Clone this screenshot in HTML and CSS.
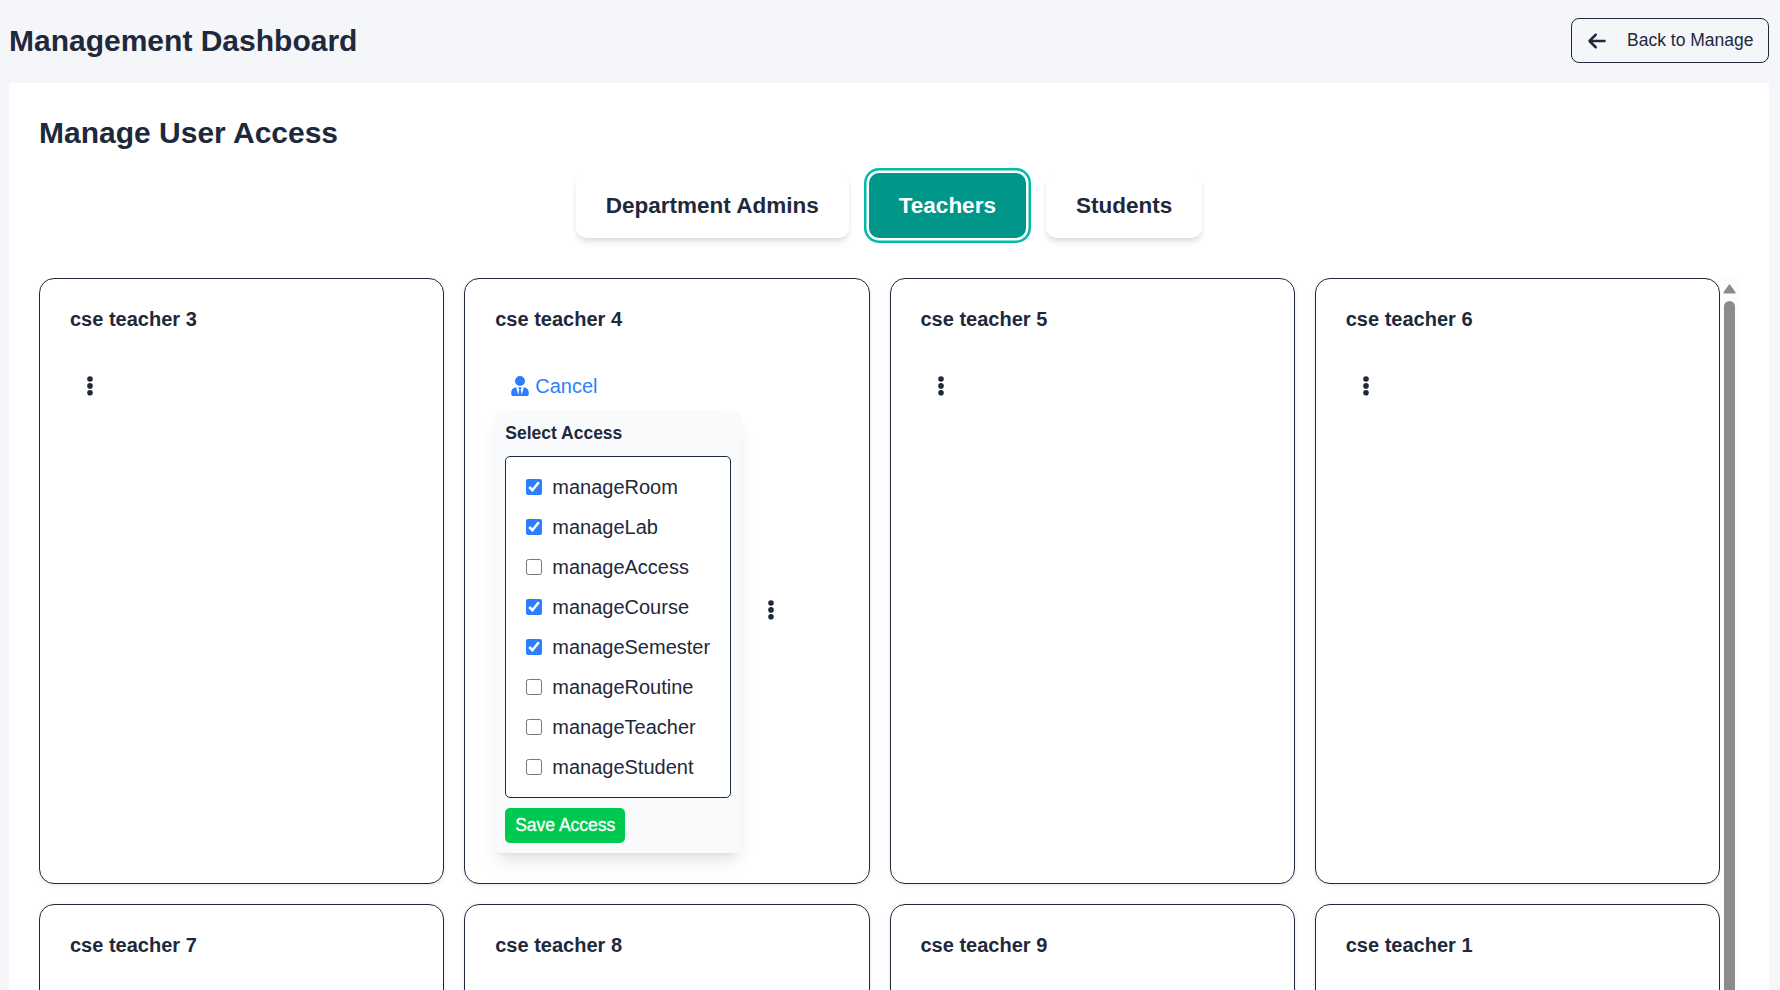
FILE: index.html
```html
<!DOCTYPE html>
<html lang="en">
<head>
<meta charset="utf-8">
<title>Management Dashboard</title>
<link rel="stylesheet" href="styles.css">
</head>
<body>
<svg class="defs" aria-hidden="true">
  <symbol id="dots" viewBox="0 0 6 20"><circle cx="3" cy="3" r="2.800"/><circle cx="3" cy="9.900" r="2.800"/><circle cx="3" cy="16.800" r="2.800"/></symbol>
</svg>
<header class="topbar">
  <h1>Management Dashboard</h1>
  <button class="back">
    <svg class="arrow" viewBox="0 0 448 512"><path d="M9.400 233.400c-12.500 12.500-12.500 32.800 0 45.300l160 160c12.500 12.500 32.800 12.500 45.300 0s12.500-32.800 0-45.300L109.200 288 416 288c17.700 0 32-14.300 32-32s-14.300-32-32-32l-306.700 0L214.600 118.600c12.500-12.500 12.500-32.800 0-45.300s-32.800-12.500-45.300 0l-160 160z"/></svg>
    <span>Back to Manage</span>
  </button>
</header>
<main class="page">
  <h2>Manage User Access</h2>
  <nav class="tabs">
    <button class="tab">Department Admins</button>
    <button class="tab active">Teachers</button>
    <button class="tab">Students</button>
  </nav>
  <div class="scroller">
    <div class="grid">
      <article class="card"><h3>cse teacher 3</h3><div class="row"><button class="menu"><svg><use href="#dots"/></svg></button></div></article>
      <article class="card">
        <h3>cse teacher 4</h3>
        <div class="row">
          <div class="access">
            <button class="cancel">
              <svg viewBox="0 0 448 512"><path d="M224 256a128 128 0 1 0 0-256 128 128 0 1 0 0 256zm95.800 32.600L272 480l-32-136 32-56h-96l32 56-32 136-47.800-191.400C56.900 292 0 350.300 0 422.400V464c0 26.500 21.500 48 48 48h352c26.500 0 48-21.500 48-48v-41.600c0-72.100-56.900-130.400-128.200-133.800z"/></svg>
              <span>Cancel</span>
            </button>
            <section class="panel">
              <h4>Select Access</h4>
              <div class="options">
                <label><input type="checkbox" checked><span>manageRoom</span></label>
                <label><input type="checkbox" checked><span>manageLab</span></label>
                <label><input type="checkbox"><span>manageAccess</span></label>
                <label><input type="checkbox" checked><span>manageCourse</span></label>
                <label><input type="checkbox" checked><span>manageSemester</span></label>
                <label><input type="checkbox"><span>manageRoutine</span></label>
                <label><input type="checkbox"><span>manageTeacher</span></label>
                <label><input type="checkbox"><span>manageStudent</span></label>
              </div>
              <button class="save">Save Access</button>
            </section>
          </div>
          <button class="menu"><svg><use href="#dots"/></svg></button>
        </div>
      </article>
      <article class="card"><h3>cse teacher 5</h3><div class="row"><button class="menu"><svg><use href="#dots"/></svg></button></div></article>
      <article class="card"><h3>cse teacher 6</h3><div class="row"><button class="menu"><svg><use href="#dots"/></svg></button></div></article>
      <article class="card"><h3>cse teacher 7</h3></article>
      <article class="card"><h3>cse teacher 8</h3></article>
      <article class="card"><h3>cse teacher 9</h3></article>
      <article class="card"><h3>cse teacher 1</h3></article>
    </div>
    <div class="scrollbar">
      <svg viewBox="0 0 13 10"><path d="M6.500 1.200 11.800 8.800H1.200z"/></svg>
      <div class="thumb"></div>
    </div>
  </div>
</main>
</body>
</html>
```
FILE: styles.css
```css
* { box-sizing: border-box; margin: 0; padding: 0; }
body {
  height: 990px;
  overflow: hidden;
  display: flex;
  flex-direction: column;
  background: #f4f6fa;
  color: #1e293b;
  font: 20px/30px "Liberation Sans", Arial, sans-serif;
}
button { font: inherit; color: inherit; background: none; border: 0; }
.defs { position: absolute; width: 0; height: 0; }

.topbar {
  height: 83px;
  flex: none;
  display: flex;
  align-items: flex-start;
  justify-content: space-between;
  padding: 18px 11px 0 9px;
}
h1, h2 { font-size: 30px; font-weight: 700; line-height: 45px; }
.back {
  width: 198px;
  height: 45px;
  display: flex;
  align-items: center;
  padding-left: 16px;
  border: 1px solid #1e293b;
  border-radius: 8px;
  font-size: 17.5px;
  line-height: 25px;
  white-space: nowrap;
}
.back span { margin: 0 0 0 21px; }
.arrow { width: 18px; height: 20px; fill: currentColor; }

.page {
  flex: 1;
  min-height: 0;
  margin: 0 11px 0 9px;
  padding: 27px 30px 0;
  background: #fff;
}
.tabs { display: flex; justify-content: center; gap: 20px; padding-top: 18px; }
.tab {
  height: 65px;
  padding: 0 30px;
  border-radius: 10px;
  background: #fff;
  font-size: 22.5px;
  font-weight: 700;
  box-shadow: 0 5px 7.5px -1px rgb(0 0 0 / .1), 0 2.5px 5px -2.5px rgb(0 0 0 / .1);
}
.tab.active {
  background: #009689;
  color: #fff;
  box-shadow: 0 0 0 2.5px #fff, 0 0 0 5px #00bba7, 0 5px 7.5px -1px rgb(0 0 0 / .1);
}

.scroller { display: flex; margin-top: 40px; height: 712px; overflow: hidden; }
.grid {
  flex: 1;
  display: grid;
  grid-template-columns: repeat(4, 1fr);
  grid-template-rows: 606px 606px;
  gap: 20px;
}
.card {
  min-width: 0;
  padding: 30px;
  border: 1px solid #1e293b;
  border-radius: 15px;
  box-shadow: 0 1px 4px rgb(0 0 0 / .1);
}
h3 { font-size: 20px; line-height: 20px; }
.row { display: flex; align-items: center; gap: 10px; margin-top: 37px; }
.menu { width: 40px; height: 40px; display: grid; place-items: center; }
.menu svg { width: 6px; height: 20px; fill: currentColor; }

.access { width: 246px; }
.cancel { display: flex; align-items: center; gap: 6px; height: 40px; padding-left: 16px; color: #2b7fff; }
.cancel svg { width: 18px; height: 20px; fill: currentColor; }
.panel {
  margin-top: 5px;
  height: 442px;
  padding: 10px;
  border-radius: 5px;
  background: #f9fafc;
  box-shadow: 0 12px 19px -4px rgb(0 0 0 / .1), 0 5px 7.5px -5px rgb(0 0 0 / .1);
}
h4 { height: 35px; font-size: 17.5px; line-height: 25px; }
.options {
  height: 342px;
  padding: 10px 20px;
  border: 1px solid #1e293b;
  border-radius: 5px;
  background: #fff;
}
.options label { height: 40px; display: flex; align-items: center; gap: 10px; }
.options input { width: 16px; height: 16px; accent-color: #2b7fff; }
.save {
  display: block;
  width: 120px;
  height: 35px;
  margin-top: 10px;
  padding-bottom: 1px;
  border-radius: 5px;
  background: #00c951;
  color: #fff;
  font-size: 17.5px;
  line-height: 25px;
  white-space: nowrap;
  -webkit-text-stroke: .3px #fff;
}

.scrollbar {
  width: 19px;
  flex: none;
  display: flex;
  flex-direction: column;
  align-items: center;
  padding-top: 6px;
  background: #fcfcfc;
}
.scrollbar svg { width: 13px; height: 10px; fill: #8b8b8b; stroke: #8b8b8b; stroke-width: 1.6; stroke-linejoin: round; }
.thumb { width: 11px; flex: 1; margin-top: 7px; border-radius: 6px 6px 0 0; background: #8b8b8b; }
```
